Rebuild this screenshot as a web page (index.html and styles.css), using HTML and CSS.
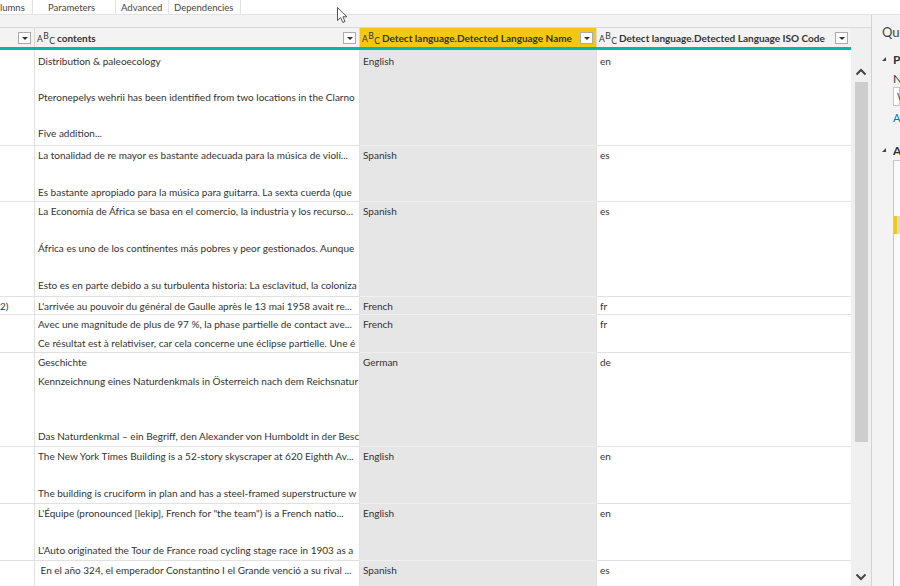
FILE: index.html
```html
<!DOCTYPE html>
<html>
<head>
<meta charset="utf-8">
<link rel="stylesheet" href="styles.css">
</head>
<body>
<div class="app">
  <div class="tabs">
    <div class="tab first">lumns</div>
    <div class="tab params">Parameters</div>
    <div class="tab adv">Advanced</div>
    <div class="tab dep">Dependencies</div>
  </div>
  <div class="main">
    <div class="left">
      <div class="strip"></div>
      <div class="gridwrap">
        <div class="table">
          <div class="head">
            <div class="hcell"><span class="dd"></span></div>
            <div class="hcell"><span class="abc">A<span class="b">B</span><span class="c">C</span></span><span class="htext">contents</span><span class="dd"></span></div>
            <div class="hcell sel"><span class="abc">A<span class="b">B</span><span class="c">C</span></span><span class="htext">Detect language.Detected Language Name</span><span class="dd"></span></div>
            <div class="hcell last"><span class="abc">A<span class="b">B</span><span class="c">C</span></span><span class="htext">Detect language.Detected Language ISO Code</span><span class="dd"></span></div>
          </div>
          <div class="body">
            <div class="cell num first-row"></div>
            <div class="cell first-row">Distribution &amp; paleoecology<br><br>Pteronepelys wehrii has been identified from two locations in the Clarno<br><br>Five addition...</div>
            <div class="cell s first-row">English</div>
            <div class="cell last first-row">en</div>

            <div class="cell num"></div>
            <div class="cell">La tonalidad de re mayor es bastante adecuada para la música de violí...<br><br>Es bastante apropiado para la música para guitarra. La sexta cuerda (que</div>
            <div class="cell s">Spanish</div>
            <div class="cell last">es</div>

            <div class="cell num"></div>
            <div class="cell">La Economía de África se basa en el comercio, la industria y los recurso...<br><br>África es uno de los continentes más pobres y peor gestionados. Aunque<br><br>Esto es en parte debido a su turbulenta historia: La esclavitud, la coloniza</div>
            <div class="cell s">Spanish</div>
            <div class="cell last">es</div>

            <div class="cell num">2)</div>
            <div class="cell">L'arrivée au pouvoir du général de Gaulle après le 13 mai 1958 avait re...</div>
            <div class="cell s">French</div>
            <div class="cell last">fr</div>

            <div class="cell num"></div>
            <div class="cell">Avec une magnitude de plus de 97 %, la phase partielle de contact ave...<br>Ce résultat est à relativiser, car cela concerne une éclipse partielle. Une é</div>
            <div class="cell s">French</div>
            <div class="cell last">fr</div>

            <div class="cell num"></div>
            <div class="cell">Geschichte<br>Kennzeichnung eines Naturdenkmals in Österreich nach dem Reichsnatur<br><br><br>Das Naturdenkmal – ein Begriff, den Alexander von Humboldt in der Besc</div>
            <div class="cell s">German</div>
            <div class="cell last">de</div>

            <div class="cell num"></div>
            <div class="cell">The New York Times Building is a 52-story skyscraper at 620 Eighth Av...<br><br>The building is cruciform in plan and has a steel-framed superstructure w</div>
            <div class="cell s">English</div>
            <div class="cell last">en</div>

            <div class="cell num"></div>
            <div class="cell">L'Équipe (pronounced [lekip], French for "the team") is a French natio...<br><br>L'Auto originated the Tour de France road cycling stage race in 1903 as a</div>
            <div class="cell s">English</div>
            <div class="cell last">en</div>

            <div class="cell num"></div>
            <div class="cell">&nbsp;En el año 324, el emperador Constantino I el Grande venció a su rival ...<br>Vista de la Constantinopla bizantina</div>
            <div class="cell s">Spanish</div>
            <div class="cell last">es</div>
          </div>
        </div>
        <div class="scrollbar">
          <div class="sb-btn up"><svg width="12" height="8" viewBox="0 0 12 8"><path d="M1.5 6.5 L6 2 L10.5 6.5" fill="none" stroke="#444" stroke-width="2"/></svg></div>
          <div class="thumb"></div>
          <div class="track"></div>
          <div class="sb-btn down"><svg width="12" height="8" viewBox="0 0 12 8"><path d="M1.5 1.5 L6 6 L10.5 1.5" fill="none" stroke="#444" stroke-width="2"/></svg></div>
        </div>
      </div>
    </div>
    <div class="panel">
      <div class="ptitle">Query Settings</div>
      <div class="psec"><span class="tri"></span><span class="pname">PROPERTIES</span></div>
      <div class="plabel">Name</div>
      <div class="pinput">Wikipedia</div>
      <div class="plink">All Properties</div>
      <div class="psec steps"><span class="tri"></span><span class="pname">APPLIED STEPS</span></div>
      <div class="plist">
        <div class="step"></div>
        <div class="step"></div>
        <div class="step"></div>
        <div class="step cur"></div>
      </div>
    </div>
  </div>
</div>
<svg class="cursor" width="12" height="17" viewBox="0 0 12 17"><path d="M0.5 0.5 L0.5 13.5 L3.6 10.6 L5.8 15.5 L8 14.5 L5.9 9.8 L10 9.8 Z" fill="#fff" stroke="#555" stroke-width="1"/></svg>
</body>
</html>
```
FILE: styles.css
```css
* { box-sizing: border-box; margin: 0; padding: 0; }
html, body { width: 900px; height: 586px; overflow: hidden; background: #fff; }
body { font-family: Lato, "Liberation Sans", sans-serif; color: #333; }

.app { display: flex; flex-direction: column; height: 586px; }

.tabs { height: 15px; flex: none; display: flex; border-bottom: 1px solid #e3e3e3; background: #fff; font-size: 9.5px; color: #444; }
.tab { display: flex; align-items: center; height: 14px; padding-left: 5px; border-right: 1px solid #e3e3e3; white-space: nowrap; overflow: hidden; flex: none; }
.tab.first { width: 33px; padding-left: 0; }
.tab.params { width: 83px; padding-left: 15px; }
.tab.adv { width: 53px; }
.tab.dep { width: 72px; }

.main { flex: 1; display: flex; min-height: 0; }

.left { width: 872px; flex: none; display: flex; flex-direction: column; background: #f3f3f3; border-right: 1px solid #d2d2d2; }
.strip { height: 12px; flex: none; }
.gridwrap { flex: 1; display: flex; min-height: 0; border-top: 1px solid #dadada; }

.table { width: 851px; flex: none; background: #fff; overflow: hidden; }
.head { display: grid; grid-template-columns: 35px 325px 237px 254px; height: 22px; border-bottom: 3px solid #01b8aa; background: #f3f3f3; }
.hcell { display: flex; align-items: center; padding: 0 3px 0 2px; border-right: 1px solid #dadada; font-weight: bold; font-size: 10px; color: #333; white-space: nowrap; overflow: hidden; }
.hcell.last { border-right: none; }
.hcell.sel { background: #f2c811; }
.htext { margin-left: 5px; }
.abc { position: relative; display: inline-block; width: 15px; height: 14px; font-size: 8.5px; font-weight: normal; line-height: 14px; color: #333; padding-top: 1px; }
.abc .b { position: relative; top: -3px; margin-left: 0.5px; }
.abc .c { position: relative; top: 2px; margin-left: 0.5px; }
.dd { position: relative; margin-left: auto; width: 13px; height: 12px; border: 1px solid #ababab; background: #fff; flex: none; }
.dd::after { content: ""; position: absolute; left: 3px; top: 4px; border-left: 3px solid transparent; border-right: 3px solid transparent; border-top: 3px solid #333; }

.body { display: grid; grid-template-columns: 35px 325px 237px 254px; grid-template-rows: 96px 56px 95px 18px 38px 94px 57px 57px 60px; }
.cell { padding: 0 2px 0 3px; border-right: 1px solid #e1e1e1; border-bottom: 1px solid #e1e1e1; font-size: 10px; line-height: 18.6px; white-space: nowrap; overflow: hidden; color: #333; }
.cell.first-row { padding-top: 2px; line-height: 18px; }
.cell.num { padding-left: 0; }
.cell.s { background: #e6e6e6; border-bottom-color: #f0f0f0; }
.cell.last { border-right: none; }

.scrollbar { width: 20px; flex: none; display: flex; flex-direction: column; align-items: center; padding-top: 34px; background: #f0f0f0; }
.sb-btn { height: 20px; width: 20px; display: flex; align-items: center; justify-content: center; flex: none; }
.sb-btn.down { height: 18px; }
.thumb { width: 13px; height: 360px; background: #cdcdcd; flex: none; }
.track { flex: 1; }

.panel { flex: 1; background: #f3f3f3; padding-left: 10px; overflow: hidden; white-space: nowrap; }
.ptitle { font-size: 13px; color: #444; margin-top: 9px; height: 17px; line-height: 17px; }
.psec { display: flex; align-items: center; margin-top: 10px; height: 16px; }
.tri { width: 0; height: 0; border-left: 4px solid transparent; border-bottom: 4px solid #444; margin-right: 7px; }
.pname { font-weight: bold; font-size: 12px; color: #333; }
.plabel { margin-left: 11px; margin-top: 4px; font-size: 12px; height: 16px; line-height: 16px; color: #333; }
.pinput { margin-left: 11px; margin-top: 0; height: 19px; border: 1px solid #c6c6c6; background: #fff; font-size: 10px; line-height: 17px; padding-left: 3px; color: #555; }
.plink { margin-left: 11px; margin-top: 5px; font-size: 11px; color: #0078d4; height: 14px; line-height: 14px; }
.psec.steps { margin-top: 17px; }
.plist { margin-left: 11px; margin-top: 2px; height: 500px; border: 1px solid #c6c6c6; border-right: none; background: #fafafa; padding-top: 1px; }
.step { height: 18px; }
.step.cur { background: #dadada; border-left: 3px solid #f2c811; }

.cursor { position: absolute; left: 337px; top: 7px; }
```
